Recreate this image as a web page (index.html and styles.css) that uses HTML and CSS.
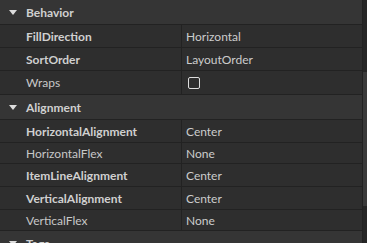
FILE: index.html
```html
<!DOCTYPE html>
<html>

<head>
  <title>Properties</title>
  <link rel="stylesheet" href="styles.css">
</head>

<body>

  <div class="panel">
    <div class="props">

      <div class="section-header">
        <span class="arrow"></span>
        <span class="section-title">Behavior</span>
      </div>
      <div class="row">
        <div class="name bold">FillDirection</div>
        <div class="value">Horizontal</div>
      </div>
      <div class="row">
        <div class="name bold">SortOrder</div>
        <div class="value">LayoutOrder</div>
      </div>
      <div class="row row-tall">
        <div class="name">Wraps</div>
        <div class="value"><span class="checkbox"></span></div>
      </div>

      <div class="section-header">
        <span class="arrow"></span>
        <span class="section-title">Alignment</span>
      </div>
      <div class="row">
        <div class="name bold">HorizontalAlignment</div>
        <div class="value">Center</div>
      </div>
      <div class="row row-short">
        <div class="name">HorizontalFlex</div>
        <div class="value">None</div>
      </div>
      <div class="row">
        <div class="name bold">ItemLineAlignment</div>
        <div class="value">Center</div>
      </div>
      <div class="row">
        <div class="name bold">VerticalAlignment</div>
        <div class="value">Center</div>
      </div>
      <div class="row row-short">
        <div class="name">VerticalFlex</div>
        <div class="value">None</div>
      </div>

      <div class="section-header">
        <span class="arrow"></span>
        <span class="section-title">Tags</span>
        <span class="add">+</span>
      </div>

    </div>
    <div class="scrollbar">
      <div class="thumb"></div>
    </div>
  </div>

</body>

</html>
```

FILE: styles.css
```css
* {
  box-sizing: border-box;
  font-family: Lato, "Noto Sans", sans-serif;
}

body {
  margin: 0;
  background-color: #2e2e2e;
  overflow: hidden;
}

/* Panel */
.panel {
  display: flex;
  width: 367px;
  height: 243px;
  overflow: hidden;
}

.props {
  flex: 1;
  border-right: 1px solid #222222;
}

/* Section headers */
.section-header {
  display: flex;
  align-items: center;
  height: 25px;
  background-color: #353535;
  border-bottom: 1px solid #222222;
  padding-left: 9px;
  color: #d0d0d0;
  font-size: 12px;
  font-weight: bold;
}

.arrow {
  width: 0;
  height: 0;
  border-left: 4px solid transparent;
  border-right: 4px solid transparent;
  border-top: 5px solid #dddddd;
  margin-right: 9px;
}

.section-title {
  flex: 1;
}

.add {
  color: #aaaaaa;
  font-size: 16px;
  margin-right: 10px;
  margin-top: 10px;
}

/* Property rows */
.row {
  display: flex;
  height: 23px;
  border-bottom: 1px solid #222222;
  font-size: 12px;
  color: #cccccc;
}

.row-tall {
  height: 24px;
}

.row-short {
  height: 21px;
}

.name {
  width: 182px;
  padding-left: 26px;
  display: flex;
  align-items: center;
  border-right: 1px solid #222222;
  color: #c8c8c8;
}

.bold {
  font-weight: bold;
  color: #d0d0d0;
}

.value {
  flex: 1;
  padding-left: 4px;
  display: flex;
  align-items: center;
}

.checkbox {
  width: 12px;
  height: 12px;
  margin-left: 2px;
  border: 1px solid #dddddd;
  border-radius: 2px;
}

/* Scrollbar */
.scrollbar {
  width: 4px;
  background-color: #262626;
  padding-top: 72px;
}

.thumb {
  height: 134px;
  background-color: #3a3a3a;
}
```
